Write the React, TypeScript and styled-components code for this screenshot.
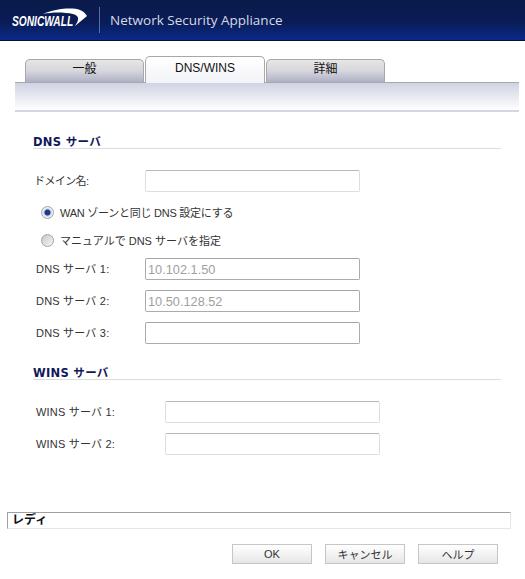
import React from 'react';
import styled, { createGlobalStyle } from 'styled-components';

const GlobalStyle = createGlobalStyle`
  html, body {
    margin: 0;
    padding: 0;
    background: #fff;
  }
  body {
    font-family: "Liberation Sans", "Noto Sans CJK JP", sans-serif;
    font-size: 11px;
    color: #333;
  }
`;

const Page = styled.div`
  width: 525px;
  height: 579px;
  overflow: hidden;
  display: flex;
  flex-direction: column;
`;

const Header = styled.header`
  height: 41px;
  box-sizing: border-box;
  border-bottom: 1px solid #0a0f2e;
  background: linear-gradient(#0a1a4a 0%, #0a1c56 55%, #0a2a8a 100%);
  display: flex;
  align-items: center;
  padding-left: 12px;
`;

const Logo = styled.svg`
  width: 76px;
  height: 26px;
  flex: none;
`;

const Divider = styled.div`
  width: 1px;
  height: 26px;
  margin: 0 10px 0 11px;
  background: #5a6da8;
`;

const ProductName = styled.div`
  font-family: "Open Sans", sans-serif;
  font-size: 13.5px;
  color: #d3daea;
`;

const TabArea = styled.div`
  margin-top: 15px;
  padding-left: 15px;
`;

const TabRow = styled.div`
  display: flex;
  align-items: flex-end;
  gap: 1px;
  height: 26px;
  padding-left: 10px;
`;

const Tab = styled.div<{ $active?: boolean }>`
  box-sizing: border-box;
  width: ${p => (p.$active ? 120 : 119)}px;
  height: ${p => (p.$active ? 27 : 23)}px;
  margin-bottom: ${p => (p.$active ? -1 : 0)}px;
  position: relative;
  z-index: ${p => (p.$active ? 1 : 0)};
  border: 1px solid #a8a8a8;
  border-bottom: 0;
  border-radius: 5px 5px 0 0;
  background: ${p =>
    p.$active
      ? 'linear-gradient(#ffffff, #f2f3f8)'
      : 'linear-gradient(#e6e6e6, #d6d6dc 50%, #aeb0c6)'};
  text-align: center;
  font-size: 12px;
  line-height: ${p => (p.$active ? 23 : 18)}px;
  color: #111;
`;

const TabBand = styled.div`
  width: 504px;
  height: 30px;
  box-sizing: border-box;
  border-top: 1px solid #a8a8a8;
  border-bottom: 2px solid #d4d6e4;
  background: linear-gradient(#d0d3e3, #ffffff);
`;

const Content = styled.main`
  flex: 1;
  padding: 24px 24px 0 33px;
`;

const SectionTitle = styled.h2<{ $gap?: number }>`
  margin: ${p => p.$gap ?? 0}px 0 0;
  border-bottom: 1px solid #dcdcdc;
  font-family: "DejaVu Sans", "Noto Sans CJK JP", sans-serif;
  font-size: 11.5px;
  letter-spacing: 0.3px;
  line-height: 12px;
  font-weight: bold;
  color: #10185a;
`;

const FieldRow = styled.div<{ $top?: number }>`
  display: flex;
  align-items: center;
  height: 22px;
  margin-top: ${p => p.$top ?? 10}px;
`;

const Label = styled.label<{ $wide?: boolean }>`
  width: ${p => (p.$wide ? 129 : 109)}px;
  margin-left: 3px;
  padding-bottom: 2px;
  flex: none;
  font-size: 11px;
  letter-spacing: 0.2px;
  color: #333;
`;

const DomainLabel = styled.label`
  width: 111px;
  margin-left: 1px;
  padding-bottom: 3px;
  flex: none;
  font-size: 11px;
  letter-spacing: -0.6px;
  color: #333;
`;

const TextBox = styled.input<{ $strong?: boolean }>`
  box-sizing: border-box;
  width: 215px;
  height: 22px;
  padding: 0 3px 0 2px;
  border: 1px solid ${p => (p.$strong ? '#ababab' : '#dedede')};
  border-top-color: ${p => (p.$strong ? '#a4a4a4' : '#b8b8b8')};
  border-radius: 2px;
  background: #fff;
  font-family: "Liberation Sans", sans-serif;
  font-size: 12.75px;
  color: #a0a0a0;
  outline: none;
`;

const RadioRow = styled.div<{ $top: number; $tight?: boolean }>`
  display: flex;
  align-items: center;
  gap: 6px;
  height: 14px;
  margin: ${p => p.$top}px 0 0 8px;
  font-size: 11px;
  letter-spacing: ${p => (p.$tight ? -0.25 : 0)}px;
  color: #333;
`;

const RadioDot = styled.span<{ $checked?: boolean }>`
  width: 13px;
  height: 13px;
  flex: none;
  box-sizing: border-box;
  border-radius: 50%;
  border: 1px solid #a4a4a4;
  background: ${p =>
    p.$checked
      ? 'radial-gradient(circle, #1e3a80 0 2.5px, #c9d3ea 3.5px, #eef0f6 5px)'
      : 'linear-gradient(135deg, #c8c8c8, #f6f6f6)'};
`;

const StatusBar = styled.div`
  margin: 0 14px 0 7px;
  height: 17px;
  box-sizing: border-box;
  border: 1px solid #e6e6e6;
  border-top-color: #a0a0a0;
  border-left-color: #a0a0a0;
  padding-left: 4px;
  font-size: 12px;
  line-height: 14px;
  font-weight: bold;
  color: #111;
`;

const ButtonBar = styled.div`
  display: flex;
  justify-content: flex-end;
  gap: 13px;
  padding: 15px 27px 15px 0;
`;

const Button = styled.button`
  box-sizing: border-box;
  width: 80px;
  height: 20px;
  padding: 0;
  border: 1px solid #c6c6c6;
  background: linear-gradient(#ffffff, #e6e6e6);
  font-family: "Liberation Sans", "Noto Sans CJK JP", sans-serif;
  font-size: 11px;
  color: #333;
`;

const App = () => {
  return (
    <Page>
      <GlobalStyle />
      <Header>
        <Logo viewBox="0 0 76 26">
          <path
            d="M31 7C42 2 60 0 68 3 71 4 73 6 75 9L63 19C67 13 68 9 61 7 52 5 40 5 31 7Z"
            fill="#fff"
          />
          <text
            transform="translate(0 19) scale(0.68 1)"
            fontFamily="Liberation Sans"
            fontSize="15"
            fontStyle="italic"
            fontWeight="bold"
            fill="#fff"
          >
            SONICWALL
          </text>
        </Logo>
        <Divider />
        <ProductName>Network Security Appliance</ProductName>
      </Header>

      <TabArea>
        <TabRow>
          <Tab>一般</Tab>
          <Tab $active>DNS/WINS</Tab>
          <Tab>詳細</Tab>
        </TabRow>
        <TabBand />
      </TabArea>

      <Content>
        <SectionTitle>DNS サーバ</SectionTitle>
        <FieldRow $top={21}>
          <DomainLabel>ドメイン名:</DomainLabel>
          <TextBox readOnly />
        </FieldRow>
        <RadioRow $top={13} $tight>
          <RadioDot $checked />
          WAN ゾーンと同じ DNS 設定にする
        </RadioRow>
        <RadioRow $top={14}>
          <RadioDot />
          マニュアルで DNS サーバを指定
        </RadioRow>
        <FieldRow $top={11}>
          <Label>DNS サーバ 1:</Label>
          <TextBox $strong readOnly value="10.102.1.50" />
        </FieldRow>
        <FieldRow>
          <Label>DNS サーバ 2:</Label>
          <TextBox $strong readOnly value="10.50.128.52" />
        </FieldRow>
        <FieldRow>
          <Label>DNS サーバ 3:</Label>
          <TextBox $strong readOnly />
        </FieldRow>
        <SectionTitle $gap={23}>WINS サーバ</SectionTitle>
        <FieldRow $top={21}>
          <Label $wide>WINS サーバ 1:</Label>
          <TextBox readOnly />
        </FieldRow>
        <FieldRow>
          <Label $wide>WINS サーバ 2:</Label>
          <TextBox readOnly />
        </FieldRow>
      </Content>

      <StatusBar>レディ</StatusBar>
      <ButtonBar>
        <Button>OK</Button>
        <Button>キャンセル</Button>
        <Button>ヘルプ</Button>
      </ButtonBar>
    </Page>
  );
};

export default App;
